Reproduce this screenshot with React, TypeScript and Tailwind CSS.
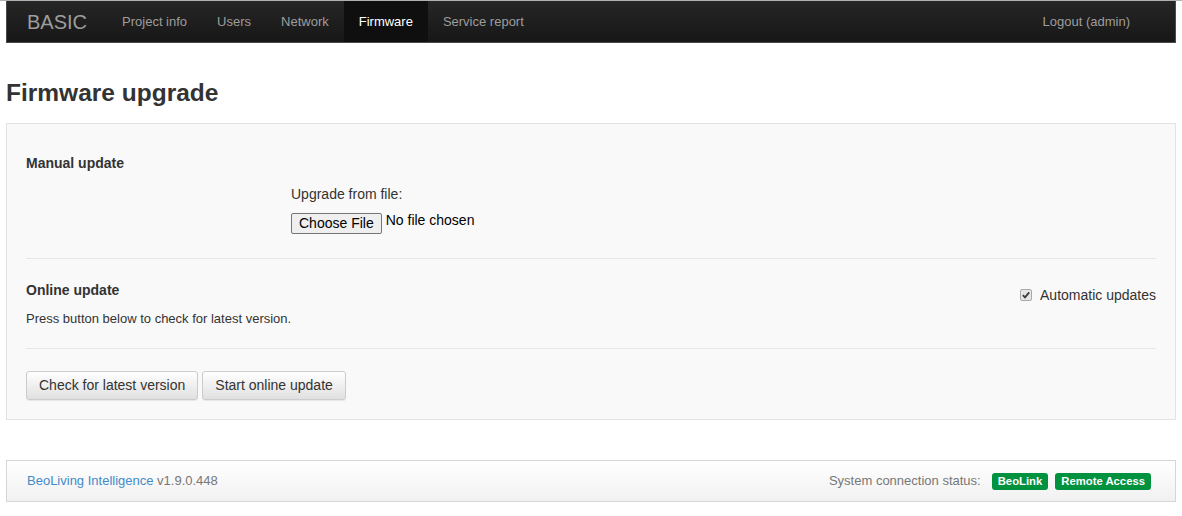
const navItems = ['Project info', 'Users', 'Network', 'Firmware', 'Service report']

function Checkbox() {
  return (
    <span className="inline-flex items-center justify-center w-[12px] h-[12px] rounded-[2px] border border-[#a9a9a9] bg-[#e6e6e6]">
      <svg viewBox="0 0 12 12" className="w-[10px] h-[10px]">
        <path d="M2.2 6.2 L4.8 8.8 L9.8 2.8" fill="none" stroke="#3a3a3a" strokeWidth="2.2" />
      </svg>
    </span>
  )
}

function Button({ children }: { children: React.ReactNode }) {
  return (
    <button className="h-[29px] px-[12px] rounded-[3px] border border-[#cccccc] bg-gradient-to-b from-white to-[#e0e0e0] text-[14px] text-[#333] shadow-[inset_0_1px_0_rgba(255,255,255,0.15),0_1px_1px_rgba(0,0,0,0.075)]">
      {children}
    </button>
  )
}

export default function App() {
  return (
    <div className="min-h-screen bg-white border-t border-[#b0b0b0] text-[#333] text-[14px]" style={{ fontFamily: "'Liberation Sans', Arial, sans-serif" }}>
      <div className="w-[1170px] mx-auto">
        {/* Navbar */}
        <nav className="h-[42px] flex items-stretch bg-gradient-to-b from-[#262626] to-[#171717] border-x border-b border-[#4a4a4a] text-[13px]">
          <span className="flex items-center pl-[20px] pr-[20px] text-[20px] text-[#9d9d9d]">BASIC</span>
          {navItems.map((n) => (
            <span
              key={n}
              className={`flex items-center pt-[1px] px-[15px] ${n === 'Firmware' ? 'bg-[#0f0f0f] text-white' : 'text-[#9d9d9d]'}`}
            >
              {n}
            </span>
          ))}
          <span className="ml-auto flex items-center pt-[1px] pr-[45px] text-[#9d9d9d]">Logout (admin)</span>
        </nav>

        <h2 className="mt-[36px] mb-[16px] text-[24.5px] font-bold leading-[28px] text-[#333]">Firmware upgrade</h2>

        {/* Panel */}
        <div className="bg-[#f9f9f9] border border-[#e3e3e3] px-[19px] pt-[26px] pb-[19px]">
          <div className="font-bold leading-[26px]">Manual update</div>
          <div className="pl-[265px] pt-[9px]">
            <div className="leading-[18px]">Upgrade from file:</div>
            <div className="flex items-start mt-[10px]">
              <span className="h-[21px] px-[7px] flex items-center border border-[#767676] rounded-[2px] bg-[#efefef] text-[14px] text-black">Choose File</span>
              <span className="ml-[4px] leading-[14px] text-black">No file chosen</span>
            </div>
          </div>
          <div className="border-t border-[#e6e6e6] mt-[24px]" />

          <div className="flex justify-between pt-[22px]">
            <div>
              <div className="font-bold leading-[18px]">Online update</div>
              <div className="mt-[12px] mb-[1px] text-[13px] leading-[16px]">Press button below to check for latest version.</div>
            </div>
            <div className="flex items-center gap-[8px] pt-[2px] h-[26px]">
              <Checkbox />
              <span>Automatic updates</span>
            </div>
          </div>
          <div className="border-t border-[#e6e6e6] mt-[20px]" />

          <div className="flex gap-[4px] mt-[22px]">
            <Button>Check for latest version</Button>
            <Button>Start online update</Button>
          </div>
        </div>

        {/* Footer */}
        <footer className="mt-[40px] h-[42px] flex items-center justify-between px-[20px] border border-[#d6d6d6] bg-gradient-to-b from-white to-[#f1f1f1] text-[13px]">
          <span>
            <span className="text-[#428bca]">BeoLiving Intelligence</span>
            <span className="text-[#777]"> v1.9.0.448</span>
          </span>
          <span className="flex items-center pr-[4px]">
            <span className="text-[#777] mr-[11px]">System connection status:</span>
            <span className="px-[6px] h-[17px] leading-[17px] rounded-[3px] bg-[#00923f] text-white text-[11.3px] font-bold mr-[7px]">BeoLink</span>
            <span className="px-[6px] h-[17px] leading-[17px] rounded-[3px] bg-[#00923f] text-white text-[11.3px] font-bold">Remote Access</span>
          </span>
        </footer>
      </div>
    </div>
  )
}
